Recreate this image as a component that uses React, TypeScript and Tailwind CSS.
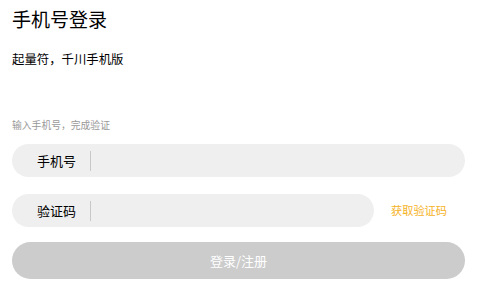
export default function App() {
  return (
    <div className="w-[480px] h-[285px] bg-white px-3 pt-[7px] font-['Noto_Sans_CJK_SC',sans-serif] text-black overflow-hidden">
      <h1 className="text-[19px] leading-[24px] font-normal">手机号登录</h1>
      <p className="mt-[20px] text-[12.4px] leading-[16px]">起量符，千川手机版</p>
      <p className="mt-[51px] text-[9.8px] leading-[14px] text-[#999]">输入手机号，完成验证</p>

      <div className="mt-[12px] flex items-center h-[33px] w-[453px] rounded-full bg-[#efefef]">
        <span className="w-[78px] pl-[25px] text-[13px] shrink-0">手机号</span>
        <div className="w-px h-[20px] bg-[#c8c8c8]"></div>
      </div>

      <div className="mt-[17px] flex items-center">
        <div className="flex items-center h-[33px] w-[362px] rounded-full bg-[#efefef]">
          <span className="w-[78px] pl-[25px] text-[13px] shrink-0">验证码</span>
          <div className="w-px h-[20px] bg-[#c8c8c8]"></div>
        </div>
        <span className="ml-[17px] text-[11.2px] text-[#f5b21e]">获取验证码</span>
      </div>

      <button className="mt-[15px] w-[453px] h-[37px] rounded-full bg-[#cccccc] text-white text-[13px]">
        登录/注册
      </button>
    </div>
  );
}
